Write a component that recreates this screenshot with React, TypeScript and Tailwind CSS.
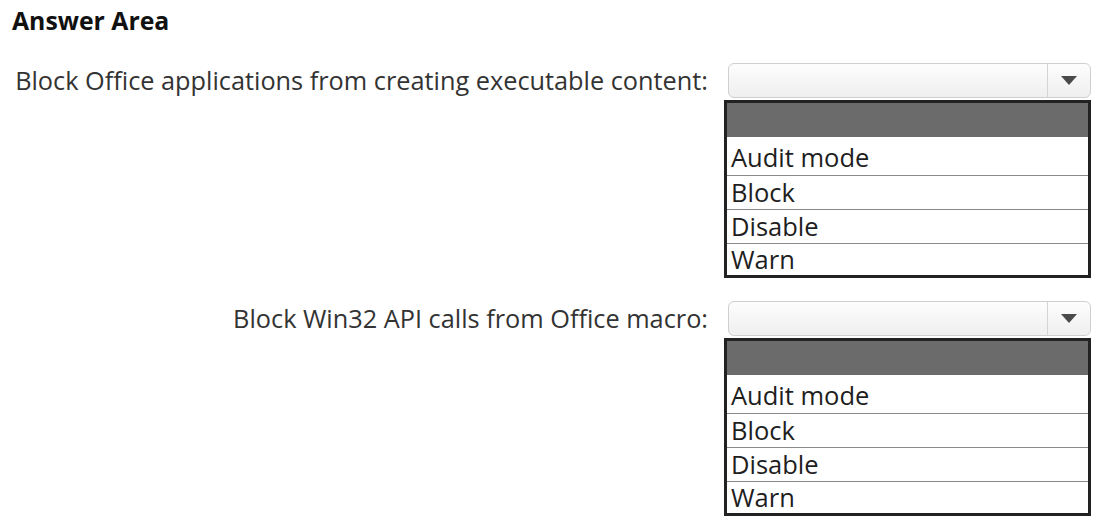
const options = ['Audit mode', 'Block', 'Disable', 'Warn'];

const Select = () => (
    <div className="flex flex-col">
        <div className="ml-[4px] flex h-[35px] items-center rounded-[6px] border border-[#cfcfcf] bg-gradient-to-b from-[#fdfdfd] to-[#efefef]">
            <div className="flex-1" />
            <div className="flex h-full w-[43px] items-center justify-center border-l border-[#d4d4d4]">
                <svg width="16" height="9" viewBox="0 0 16 9">
                    <polygon points="0,0 16,0 8,9" fill="#4a4a4a" />
                </svg>
            </div>
        </div>
        <div className="mt-[2px] border-[3px] border-[#222] bg-white">
            <div className="h-[34px] bg-[#6b6b6b]" />
            {options.map((o, i) => (
                <div
                    key={o}
                    className={`flex items-end pl-[4px] text-[25.5px] leading-none text-[#1e1e1e] ${
                        i === 0
                            ? 'h-[38px] pb-[5px]'
                            : i === 3
                              ? 'h-[32px] border-t border-[#8a8a8a] pb-[3px]'
                              : 'h-[34px] border-t border-[#8a8a8a] pb-[4px]'
                    }`}
                >
                    {o}
                </div>
            ))}
        </div>
    </div>
);

const Row = ({ label }: { label: string }) => (
    <div className="grid grid-cols-[692px_367px] gap-x-[16px]">
        <div className="flex h-[35px] items-center justify-end whitespace-nowrap text-[25.3px] text-[#333]">{label}</div>
        <Select />
    </div>
);

export default function App() {
    return (
        <div className="h-[525px] w-[1102px] bg-white pl-[16px] pt-[2px]" style={{ fontFamily: '"Open Sans", "Noto Sans", sans-serif' }}>
            <h1 className="-ml-[4px] text-[24.8px] font-bold text-[#111]">Answer Area</h1>
            <div className="mt-[24px] flex flex-col gap-[23px]">
                <Row label="Block Office applications from creating executable content:" />
                <Row label="Block Win32 API calls from Office macro:" />
            </div>
        </div>
    );
}
